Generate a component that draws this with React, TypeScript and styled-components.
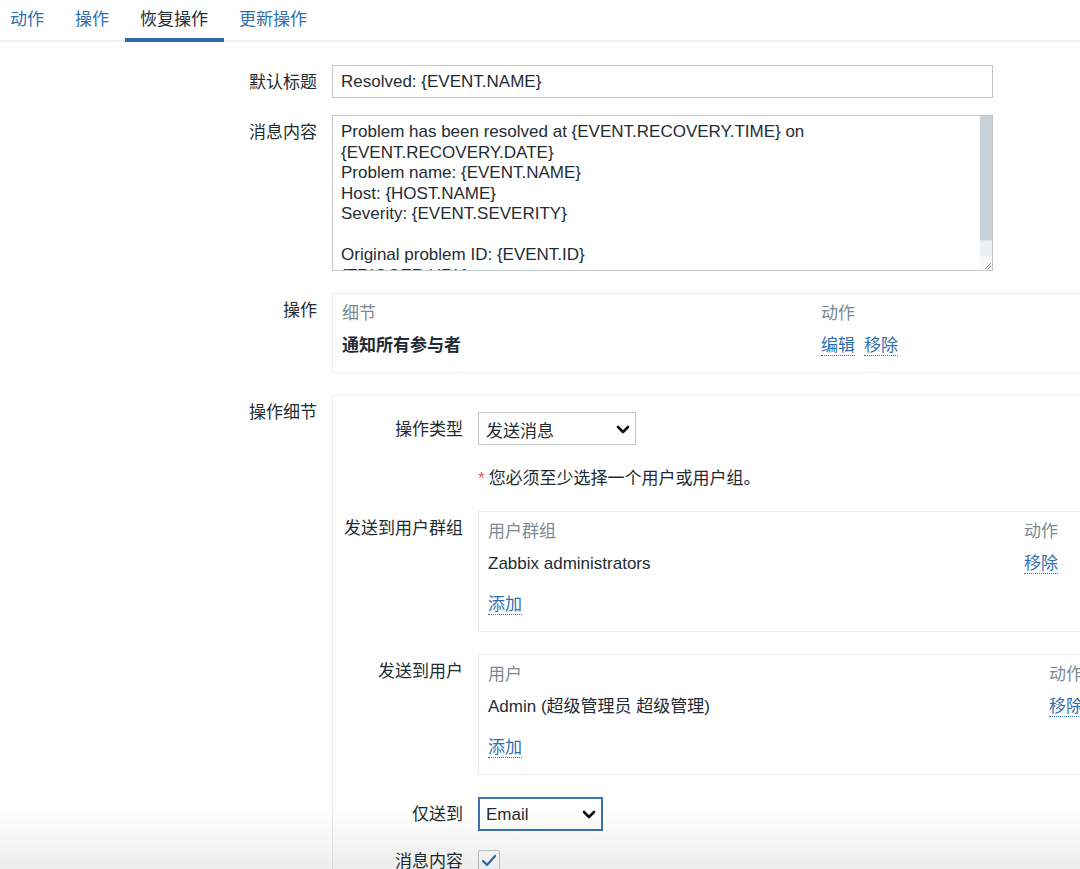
import React from "react";
import styled, { createGlobalStyle } from "styled-components";

const GlobalStyle = createGlobalStyle`
  html, body {
    margin: 0;
    padding: 0;
    background: #ffffff;
    overflow: hidden;
  }

  body {
    font-family: "Liberation Sans", "Noto Sans CJK SC", sans-serif;
    font-size: 17px;
    color: #1f2c33;
  }
`;

const Colours = {
  text: "#1f2c33",
  link: "#2f6fae",
  muted: "#7b8a93",
  border: "#ebeef0",
  input: "#bfc7cc",
  focus: "#3b73b0",
  red: "#e45959",
};

const Page = styled.div`
  width: 1240px;
  min-height: 869px;
`;

const TabBar = styled.nav`
  display: flex;
  height: 42px;
  box-shadow: inset 0 -2px 0 #f0f0f0;
`;

const Tab = styled.a<{ $active?: boolean }>`
  display: block;
  height: 42px;
  line-height: 39px;
  padding: 0 15.5px;
  cursor: pointer;
  color: ${(p) => (p.$active ? Colours.text : Colours.link)};
  box-shadow: ${(p) => (p.$active ? "inset 0 -4px 0 #2e67a6" : "none")};

  &:first-child {
    padding-left: 10px;
  }
`;

const Form = styled.div`
  display: flex;
  flex-direction: column;
  padding-top: 23px;
`;

const FormRow = styled.div<{ $space?: number }>`
  display: grid;
  grid-template-columns: 317px 1fr;
  column-gap: 15px;
  margin-bottom: ${(p) => p.$space ?? 22}px;
`;

const Label = styled.div<{ $compact?: boolean }>`
  text-align: right;
  white-space: nowrap;
  line-height: ${(p) => (p.$compact ? "22px" : "20px")};
  padding-top: ${(p) => (p.$compact ? "1px" : "8px")};
`;

const TextInput = styled.input`
  display: block;
  box-sizing: border-box;
  width: 661px;
  height: 33px;
  padding: 1px 8px 0;
  border: 1px solid ${Colours.input};
  font: inherit;
  color: ${Colours.text};
  outline: none;
`;

const MessageBox = styled.div`
  display: flex;
  box-sizing: border-box;
  width: 661px;
  height: 156px;
  border: 1px solid ${Colours.input};
`;

const MessageText = styled.textarea`
  flex: 1;
  min-width: 0;
  margin: 0;
  padding: 6px 8px 0;
  border: none;
  font: inherit;
  line-height: 20.5px;
  color: ${Colours.text};
  resize: none;
  outline: none;
  overflow: hidden;
`;

const ScrollColumn = styled.div`
  width: 12px;
  display: flex;
  flex-direction: column;
  background: #eeeff0;
`;

const ScrollThumb = styled.div`
  height: 124px;
  background: #c8d2d8;
`;

const ScrollTrack = styled.div`
  flex: 1;
  border-top: 1px solid #e2e5e7;
`;

const ResizeCorner = styled.div`
  height: 14px;
  background: #f7f7f7;
  display: flex;
  align-items: flex-end;
  justify-content: flex-end;
`;

const TableBox = styled.div`
  border: 1px solid ${Colours.border};
  padding: 10px 9px 16px;
`;

const TRow = styled.div<{ $col: number }>`
  display: grid;
  grid-template-columns: ${(p) => p.$col}px auto;
  line-height: 20px;

  & + & {
    margin-top: 12px;
  }
`;

const HeadCell = styled.div`
  color: ${Colours.muted};
  white-space: nowrap;
`;

const Cell = styled.div<{ $bold?: boolean }>`
  white-space: nowrap;
  font-weight: ${(p) => (p.$bold ? "bold" : "normal")};
`;

const Link = styled.a`
  color: ${Colours.link};
  border-bottom: 1px dotted ${Colours.link};
  cursor: pointer;

  & + & {
    margin-left: 9px;
  }
`;

const AddRow = styled.div`
  margin-top: 21px;
  line-height: 20px;
`;

const DetailsBox = styled.div`
  border: 1px solid ${Colours.border};
  border-bottom: none;
  padding-top: 16px;
  display: flex;
  flex-direction: column;
`;

const NestedRow = styled.div<{ $space?: number }>`
  display: grid;
  grid-template-columns: 130px 1fr;
  column-gap: 15px;
  margin-bottom: ${(p) => p.$space ?? 22}px;
`;

const Notice = styled.div`
  line-height: 20px;
  padding-top: 2px;

  span {
    color: ${Colours.red};
    margin-right: 4px;
  }
`;

const SelectBox = styled.div<{ $width: number; $focus?: boolean }>`
  box-sizing: border-box;
  width: ${(p) => p.$width}px;
  height: ${(p) => (p.$focus ? 34 : 33)}px;
  display: flex;
  align-items: center;
  justify-content: space-between;
  padding: ${(p) => (p.$focus ? "1px 5px 0 6px" : "1px 5px 0 7px")};
  border: ${(p) => (p.$focus ? `2px solid ${Colours.focus}` : `1px solid ${Colours.input}`)};
  background: #ffffff;
  cursor: pointer;

  svg {
    flex: none;
  }
`;

const CheckBox = styled.div`
  box-sizing: border-box;
  width: 22px;
  height: 22px;
  border: 1px solid ${Colours.input};
  border-radius: 2px;
  display: flex;
  align-items: center;
  justify-content: center;
`;

const BottomFade = styled.div`
  position: fixed;
  left: 0;
  right: 0;
  bottom: 0;
  height: 60px;
  background: linear-gradient(to bottom, rgba(0, 0, 0, 0), rgba(0, 0, 0, 0.07));
  pointer-events: none;
`;

const Chevron = () => (
  <svg width="14" height="9" viewBox="0 0 14 9">
    <polyline
      points="2,2 7,7 12,2"
      fill="none"
      stroke="#111"
      strokeWidth="2.6"
      strokeLinecap="round"
      strokeLinejoin="round"
    />
  </svg>
);

const Grip = () => (
  <svg width="10" height="10" viewBox="0 0 10 10">
    <line x1="9" y1="3" x2="3" y2="9" stroke="#8a8f93" strokeWidth="1" />
    <line x1="9" y1="6" x2="6" y2="9" stroke="#8a8f93" strokeWidth="1" />
  </svg>
);

const Select: React.FC<{ value: string; width: number; focus?: boolean }> = ({ value, width, focus }) => (
  <SelectBox $width={width} $focus={focus}>
    <span>{value}</span>
    <Chevron />
  </SelectBox>
);

const message =
  "Problem has been resolved at {EVENT.RECOVERY.TIME} on {EVENT.RECOVERY.DATE}\n" +
  "Problem name: {EVENT.NAME}\n" +
  "Host: {HOST.NAME}\n" +
  "Severity: {EVENT.SEVERITY}\n" +
  "\n" +
  "Original problem ID: {EVENT.ID}\n" +
  "{TRIGGER.URL}\n";

const tabs = ["动作", "操作", "恢复操作", "更新操作"];

const App: React.FC = () => {
  return (
    <Page>
      <GlobalStyle />
      <TabBar>
        {tabs.map((t) => (
          <Tab key={t} $active={t === "恢复操作"}>
            {t}
          </Tab>
        ))}
      </TabBar>

      <Form>
        <FormRow $space={17}>
          <Label>默认标题</Label>
          <TextInput defaultValue="Resolved: {EVENT.NAME}" />
        </FormRow>

        <FormRow>
          <Label>消息内容</Label>
          <MessageBox>
            <MessageText defaultValue={message} />
            <ScrollColumn>
              <ScrollThumb />
              <ScrollTrack />
              <ResizeCorner>
                <Grip />
              </ResizeCorner>
            </ScrollColumn>
          </MessageBox>
        </FormRow>

        <FormRow>
          <Label>操作</Label>
          <TableBox>
            <TRow $col={479}>
              <HeadCell>细节</HeadCell>
              <HeadCell>动作</HeadCell>
            </TRow>
            <TRow $col={479}>
              <Cell $bold>通知所有参与者</Cell>
              <Cell>
                <Link>编辑</Link>
                <Link>移除</Link>
              </Cell>
            </TRow>
          </TableBox>
        </FormRow>

        <FormRow $space={0}>
          <Label>操作细节</Label>
          <DetailsBox>
            <NestedRow>
              <Label>操作类型</Label>
              <Select value="发送消息" width={158} />
            </NestedRow>

            <NestedRow>
              <div />
              <Notice>
                <span>*</span>您必须至少选择一个用户或用户组。
              </Notice>
            </NestedRow>

            <NestedRow>
              <Label>发送到用户群组</Label>
              <TableBox>
                <TRow $col={536}>
                  <HeadCell>用户群组</HeadCell>
                  <HeadCell>动作</HeadCell>
                </TRow>
                <TRow $col={536}>
                  <Cell>Zabbix administrators</Cell>
                  <Cell>
                    <Link>移除</Link>
                  </Cell>
                </TRow>
                <AddRow>
                  <Link>添加</Link>
                </AddRow>
              </TableBox>
            </NestedRow>

            <NestedRow>
              <Label>发送到用户</Label>
              <TableBox>
                <TRow $col={561}>
                  <HeadCell>用户</HeadCell>
                  <HeadCell>动作</HeadCell>
                </TRow>
                <TRow $col={561}>
                  <Cell>Admin (超级管理员 超级管理)</Cell>
                  <Cell>
                    <Link>移除</Link>
                  </Cell>
                </TRow>
                <AddRow>
                  <Link>添加</Link>
                </AddRow>
              </TableBox>
            </NestedRow>

            <NestedRow $space={19}>
              <Label>仅送到</Label>
              <Select value="Email" width={125} focus />
            </NestedRow>

            <NestedRow $space={40}>
              <Label $compact>消息内容</Label>
              <CheckBox>
                <svg width="16" height="14" viewBox="0 0 16 14">
                  <polyline
                    points="2,7 6,11 14,2"
                    fill="none"
                    stroke="#2e6cb0"
                    strokeWidth="2.2"
                    strokeLinecap="round"
                    strokeLinejoin="round"
                  />
                </svg>
              </CheckBox>
            </NestedRow>
          </DetailsBox>
        </FormRow>
      </Form>
      <BottomFade />
    </Page>
  );
};

export default App;
